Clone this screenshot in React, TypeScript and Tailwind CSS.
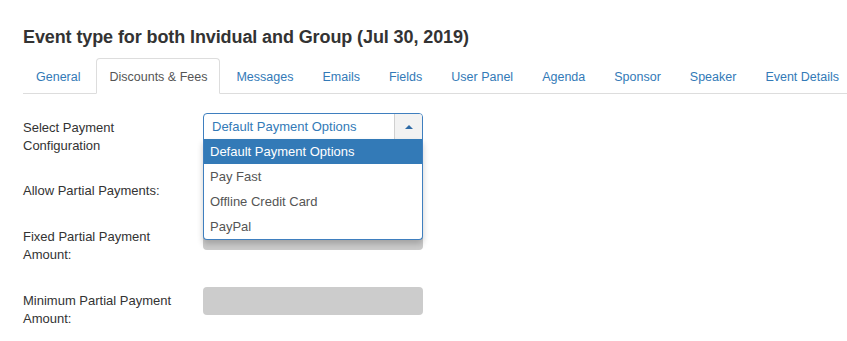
const TABS = [
  "General",
  "Discounts & Fees",
  "Messages",
  "Emails",
  "Fields",
  "User Panel",
  "Agenda",
  "Sponsor",
  "Speaker",
  "Event Details",
];

const OPTIONS = ["Default Payment Options", "Pay Fast", "Offline Credit Card", "PayPal"];

export default function App() {
  const active = "Discounts & Fees";
  const selected = "Default Payment Options";

  return (
    <div className="w-[847px] h-[341px] overflow-hidden bg-white font-['Liberation_Sans',Arial,sans-serif] text-[#333]">
      <div className="pl-[23px]">
        <h1 className="pt-[26px] text-[18px] leading-[22px] font-bold text-[#333] whitespace-nowrap tracking-[-0.1px]">
          Event type for both Invidual and Group (Jul 30, 2019)
        </h1>

        {/* Tabs */}
        <ul className="mt-[10px] flex border-b border-[#ddd] whitespace-nowrap">
          {TABS.map((t) => (
            <li key={t} className="mr-[3px] -mb-px">
              <span
                className={
                  t === active
                    ? "block px-[12px] h-[36px] leading-[36px] text-[12.5px] text-[#555] bg-white border border-[#ddd] border-b-transparent rounded-t-[4px]"
                    : "block px-[12px] h-[36px] leading-[36px] text-[12.5px] text-[#337ab7] border border-transparent"
                }
              >
                {t}
              </span>
            </li>
          ))}
        </ul>

        {/* Form */}
        <div className="mt-[19px] text-[13px] leading-[18px]">
          <div className="flex h-[63px]">
            <label className="w-[180px] pt-[6px] text-[#333]">
              Select Payment
              <br />
              Configuration
            </label>
            <div className="relative w-[220px]">
              <div className="flex h-[27px] border border-[#3f7fbf] rounded-t-[4px] bg-white">
                <span className="flex-1 pl-[8px] leading-[25px] text-[#337ab7]">{selected}</span>
                <span className="w-[28px] flex items-center justify-center bg-[#f2f2f2] border-l border-[#d0d0d0] rounded-tr-[3px]">
                  <svg width="8" height="5" viewBox="0 0 8 5">
                    <path d="M0 5 L4 1 L8 5 Z" fill="#2e6aa6" />
                  </svg>
                </span>
              </div>
              <ul className="absolute left-0 top-[26px] z-10 w-full bg-white border border-t-0 border-[#3f7fbf] rounded-b-[4px] shadow-[0_4px_6px_rgba(0,0,0,0.2)]">
                {OPTIONS.map((o) => (
                  <li
                    key={o}
                    className={
                      o === selected
                        ? "h-[25px] pl-[6px] leading-[25px] bg-[#337ab7] text-white"
                        : "h-[25px] pl-[6px] leading-[25px] text-[#555]"
                    }
                  >
                    {o}
                  </li>
                ))}
              </ul>
            </div>
          </div>

          <div className="flex h-[46px]">
            <label className="w-[180px] pt-[6px] text-[#333]">Allow Partial Payments:</label>
            <div className="w-[220px] h-[28px]" />
          </div>

          <div className="flex h-[65px]">
            <label className="w-[180px] pt-[6px] text-[#333]">
              Fixed Partial Payment
              <br />
              Amount:
            </label>
            <div className="w-[220px] h-[28px] rounded-[4px] bg-[#ccc]" />
          </div>

          <div className="flex h-[50px]">
            <label className="w-[180px] pt-[5px] text-[#333]">
              Minimum Partial Payment
              <br />
              Amount:
            </label>
            <div className="w-[220px] h-[28px] rounded-[4px] bg-[#ccc]" />
          </div>
        </div>
      </div>
    </div>
  );
}
